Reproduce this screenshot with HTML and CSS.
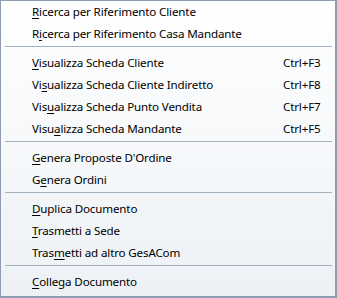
FILE: index.html
```html
<!DOCTYPE html>
<html lang="it">

<head>
  <meta charset="utf-8">
  <title>Menu documento</title>
  <link rel="stylesheet" href="styles.css">
</head>

<body>
  <div class="menu">
    <div class="item"><span class="label"><u>R</u>icerca per Riferimento Cliente</span></div>
    <div class="item"><span class="label">R<u>i</u>cerca per Riferimento Casa Mandante</span></div>
    <div class="sep"></div>
    <div class="item"><span class="label"><u>V</u>isualizza Scheda Cliente</span><span class="key">Ctrl+F3</span></div>
    <div class="item"><span class="label">Vi<u>s</u>ualizza Scheda Cliente Indiretto</span><span class="key">Ctrl+F8</span></div>
    <div class="item"><span class="label">Vis<u>u</u>alizza Scheda Punto Vendita</span><span class="key">Ctrl+F7</span></div>
    <div class="item"><span class="label">Visu<u>a</u>lizza Scheda Mandante</span><span class="key">Ctrl+F5</span></div>
    <div class="sep"></div>
    <div class="item"><span class="label"><u>G</u>enera Proposte D'Ordine</span></div>
    <div class="item"><span class="label">G<u>e</u>nera Ordini</span></div>
    <div class="sep"></div>
    <div class="item"><span class="label"><u>D</u>uplica Documento</span></div>
    <div class="item"><span class="label"><u>T</u>rasmetti a Sede</span></div>
    <div class="item"><span class="label">Tras<u>m</u>etti ad altro GesACom</span></div>
    <div class="sep"></div>
    <div class="item"><span class="label"><u>C</u>ollega Documento</span></div>
  </div>
</body>

</html>
```

FILE: styles.css
```css
* {
  box-sizing: border-box;
}

body {
  margin: 0;
  font-family: "Noto Sans", "Open Sans", sans-serif;
  font-size: 11.6px;
  letter-spacing: -0.15px;
  color: #000;
}

.menu {
  width: 337px;
  height: 298px;
  border-style: solid;
  border-color: #8d9cb0;
  border-width: 1px 2px 2px 1px;
  padding: 0 0 3px;
  background: linear-gradient(#ffffff, #edf1f5);
}

.item {
  display: flex;
  align-items: center;
  height: 22px;
  padding: 0 0 1px 31px;
}

.label {
  flex: 1;
}

.key {
  width: 52px;
}

u {
  text-underline-offset: 2px;
}

.sep {
  height: 7px;
  margin: 0 3px 0 4px;
  padding-top: 1px;
}

.sep::before {
  content: "";
  display: block;
  height: 1px;
  background: #a3b0c0;
}
```
